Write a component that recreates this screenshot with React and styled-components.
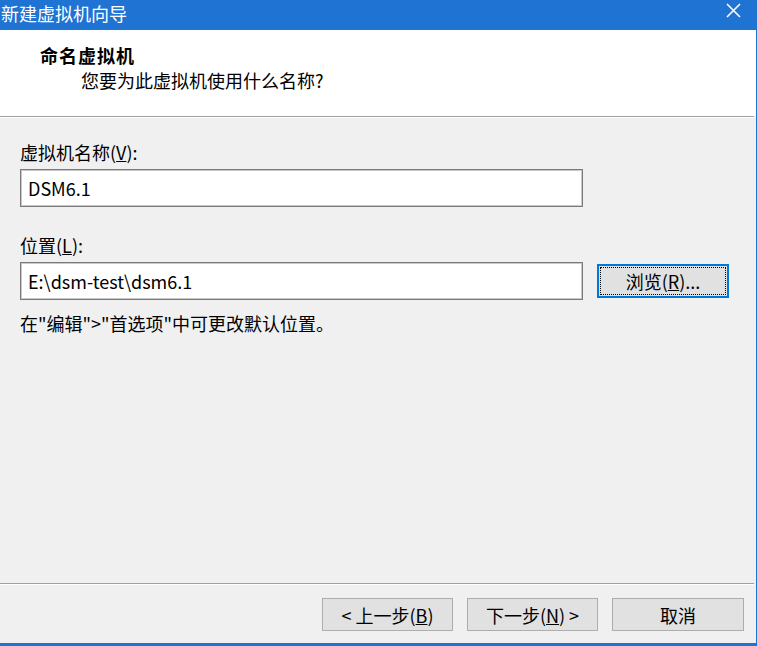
import styled, { createGlobalStyle } from "styled-components";

const GlobalStyle = createGlobalStyle`
  html, body {
    margin: 0;
    padding: 0;
    background: #f0f0f0;
  }
  * {
    box-sizing: border-box;
  }
`;

const FONT = `"Noto Sans CJK SC", "Noto Sans", sans-serif`;

const Window = styled.div`
  width: 757px;
  height: 646px;
  display: flex;
  flex-direction: column;
  background: #f0f0f0;
  border-right: 1px solid #1e73d3;
  border-bottom: 3px solid #1e73d3;
  font-family: ${FONT};
  font-size: 18px;
  color: #000;
  overflow: hidden;
`;

const TitleBar = styled.div`
  height: 30px;
  flex: none;
  display: flex;
  align-items: flex-start;
  justify-content: space-between;
  background: #1e73d3;
  color: #fff;
  padding: 0 15px 0 1px;
`;

const TitleText = styled.span`
  font-size: 18px;
  line-height: 26px;
`;

const CloseIcon = styled.svg`
  width: 15px;
  height: 15px;
  margin-top: 3px;
`;

const Header = styled.div`
  height: 86px;
  flex: none;
  background: #fff;
  padding-top: 13px;
  display: flex;
  flex-direction: column;
`;

const HeaderTitle = styled.div`
  font-weight: bold;
  line-height: 24px;
  padding-left: 40px;
  letter-spacing: 1px;
`;

const HeaderSub = styled.div`
  line-height: 24px;
  margin-top: 1px;
  padding-left: 81px;
`;

const Separator = styled.div`
  flex: none;
  height: 2px;
  margin-right: 2px;
  border-top: 1px solid #a0a0a0;
  border-bottom: 1px solid #fff;
`;

const Body = styled.div`
  flex: 1;
  padding: 22px 20px 0 20px;
  display: flex;
  flex-direction: column;
`;

const Label = styled.div`
  line-height: 24px;
  margin-top: ${(p) => p.$top || 0}px;
  margin-bottom: 5px;
`;

const Row = styled.div`
  display: flex;
  align-items: center;
  gap: 14px;
`;

const TextField = styled.input`
  width: 563px;
  height: 38px;
  padding: 0 7px;
  border: 1px solid #7a7a7a;
  box-shadow: inset 0 0 0 1px #c9c9c9;
  background: #fff;
  font-family: ${FONT};
  font-size: 18px;
  color: #000;
  outline: none;
`;

const Hint = styled.div`
  line-height: 24px;
  margin-top: 11px;
`;

const Button = styled.button`
  width: ${(p) => p.$w || 131}px;
  height: ${(p) => p.$h || 33}px;
  padding: 0;
  background: #e1e1e1;
  border: ${(p) => (p.$focused ? "2px solid #0078d7" : "1px solid #adadad")};
  outline: ${(p) => (p.$focused ? "1px dotted #000" : "none")};
  outline-offset: -4px;
  font-family: ${FONT};
  font-size: 18px;
  line-height: 24px;
  color: #000;
`;

const Footer = styled.div`
  flex: none;
  height: 58px;
  padding: 13px 12px 0 0;
  display: flex;
  justify-content: flex-end;
  gap: 14px;
`;

export default function App() {
  return (
    <>
      <GlobalStyle />
      <Window>
        <TitleBar>
          <TitleText>新建虚拟机向导</TitleText>
          <CloseIcon viewBox="0 0 15 15">
            <path d="M1 1 L14 14 M14 1 L1 14" stroke="#fff" strokeWidth="1.6" fill="none" />
          </CloseIcon>
        </TitleBar>
        <Header>
          <HeaderTitle>命名虚拟机</HeaderTitle>
          <HeaderSub>您要为此虚拟机使用什么名称?</HeaderSub>
        </Header>
        <Separator />
        <Body>
          <Label>
            虚拟机名称(<u>V</u>):
          </Label>
          <Row>
            <TextField readOnly value="DSM6.1" />
          </Row>
          <Label $top={26}>
            位置(<u>L</u>):
          </Label>
          <Row>
            <TextField readOnly value="E:\dsm-test\dsm6.1" />
            <Button $focused $w={132} $h={34}>
              浏览(<u>R</u>)...
            </Button>
          </Row>
          <Hint>在"编辑"&gt;"首选项"中可更改默认位置。</Hint>
        </Body>
        <Separator />
        <Footer>
          <Button>
            &lt; 上一步(<u>B</u>)
          </Button>
          <Button>
            下一步(<u>N</u>) &gt;
          </Button>
          <Button $w={132}>取消</Button>
        </Footer>
      </Window>
    </>
  );
}
